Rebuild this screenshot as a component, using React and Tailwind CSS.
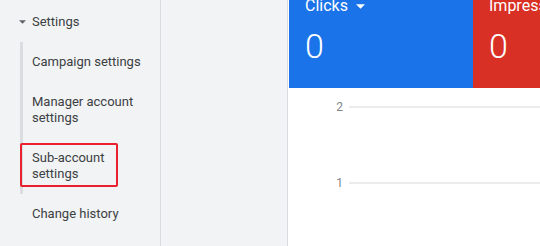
import React from 'react';

const font = { fontFamily: 'Roboto, "Liberation Sans", sans-serif' };

const Caret = ({ className }) => (
    <svg viewBox="0 0 10 5" className={className}>
        <path d="M0 0 L5 5 L10 0 Z" fill="currentColor" />
    </svg>
);

const SideNav = () => (
    <div className="w-[161px] shrink-0 h-full bg-[#f1f3f4] border-r border-[#dadce0] text-[13px] leading-4 text-[#3c4043]">
        {/* section header */}
        <div className="h-[42px] pt-[2px] flex items-center">
            <Caret className="w-[7px] h-[4px] ml-[19px] text-[#5f6368]" />
            <span className="ml-[6px]">Settings</span>
        </div>

        {/* sub items */}
        <div className="ml-[20px] border-l-[3px] border-[#dadce0] h-[152px]">
            <div className="pl-[9px] pt-[12px]">Campaign settings</div>
            <div className="pl-[9px] pt-[24px]">Manager account<br />settings</div>
            <div className="-ml-[3px] mt-[17px] w-[98px] h-[44px] border-2 border-[#e8202f] rounded-[2px] pl-[10px] pt-[5px]">
                Sub-account<br />settings
            </div>
        </div>
        <div className="pl-[32px] pt-[12px]">Change history</div>
    </div>
);

const StatCard = ({ label, value, color, width }) => (
    <div className={`${color} ${width} h-[88px] text-white px-[16px] overflow-hidden`}>
        <div className="flex items-center -mt-[4px] text-[16px] leading-5">
            <span>{label}</span>
            {label === 'Clicks' && <Caret className="w-[9px] h-[5px] ml-[8px] text-white" />}
        </div>
        <div className="mt-[10px] text-[34px] font-light leading-10">{value}</div>
    </div>
);

const GridLine = ({ label }) => (
    <div className="flex items-center h-4">
        <span className="w-[54px] text-right text-[12px] text-[#80868b]">{label}</span>
        <div className="ml-[6px] flex-1 h-[2px] bg-[#ececec]" />
    </div>
);

export default function App() {
    return (
        <div style={font} className="w-[540px] h-[246px] flex overflow-hidden bg-[#f1f3f4]">
            <SideNav />
            <div className="w-[127px] shrink-0 h-full bg-[#f1f3f4] border-r border-[#dadce0]" />
            <div className="flex-1 h-full bg-white pl-[1px]">
                <div className="flex">
                    <StatCard label="Clicks" value="0" color="bg-[#1a73e8]" width="w-[184px]" />
                    <StatCard label="Impressions" value="0" color="bg-[#d93025]" width="flex-1" />
                </div>
                <div className="pt-[11px]">
                    <GridLine label="2" />
                    <div className="h-[60px]" />
                    <GridLine label="1" />
                </div>
            </div>
        </div>
    );
}
